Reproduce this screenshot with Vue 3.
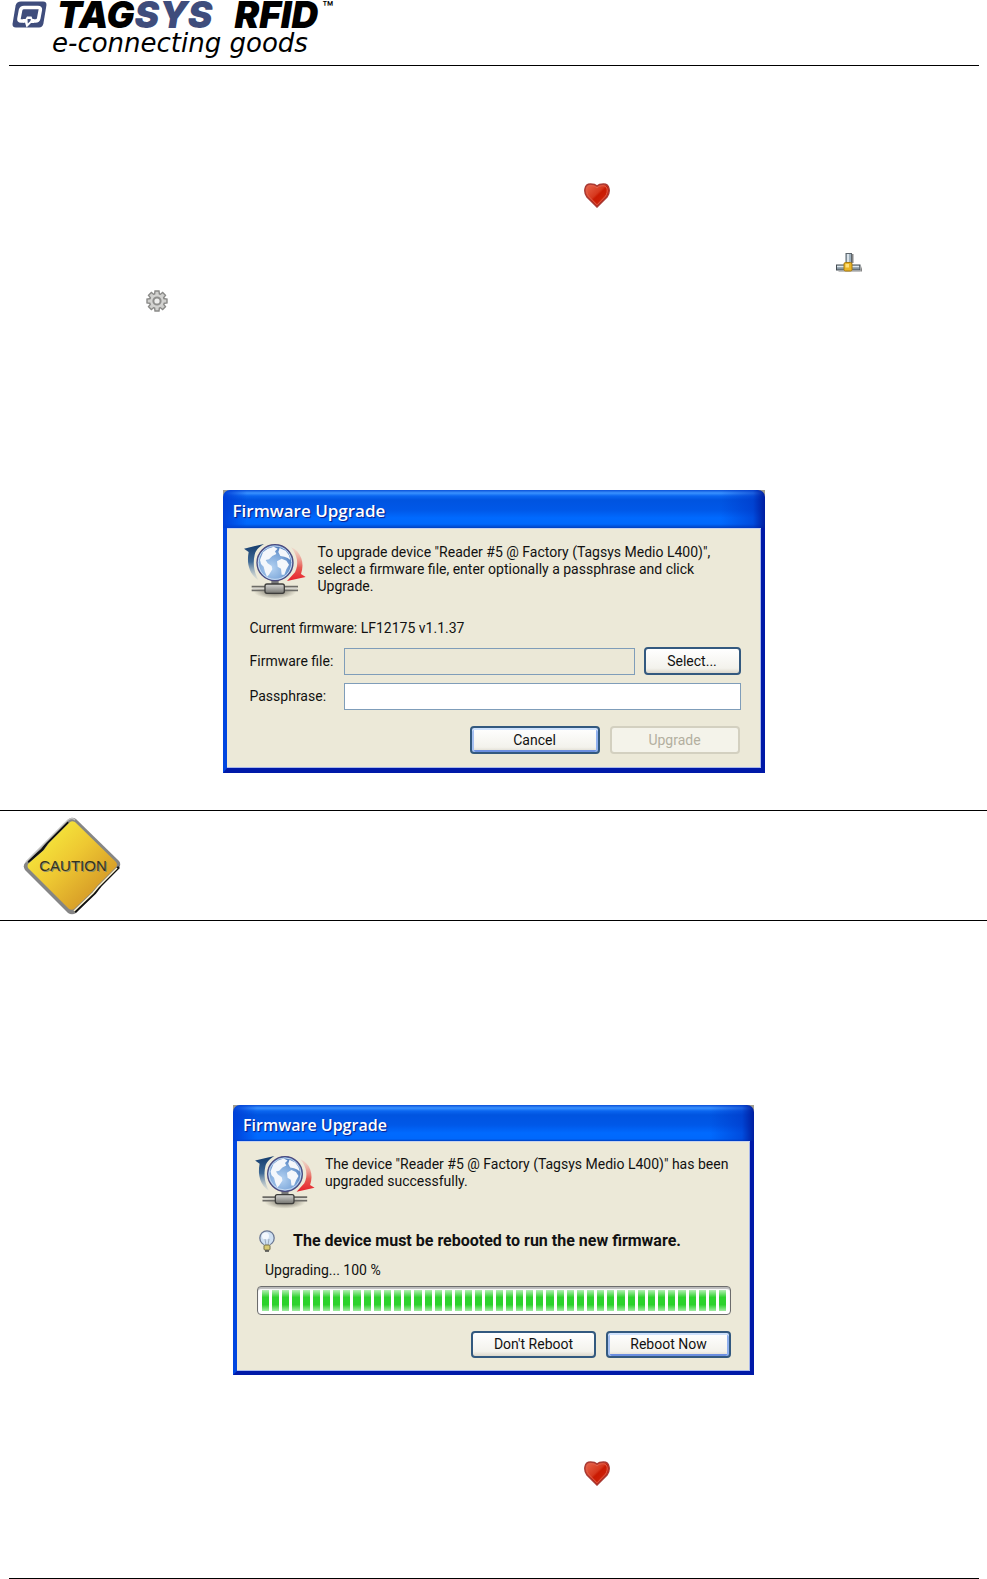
<script setup>
import { ref } from 'vue'

const firmwareFile = ref('')
const passphrase = ref('')
const segments = 46
const teeth = [0, 45, 90, 135, 180, 225, 270, 315]
</script>

<template>
  <div class="page">
    <svg class="symbols" aria-hidden="true">
      <defs>
        <linearGradient id="heartFill" x1="0" y1="0" x2="1" y2="1">
          <stop offset="0" stop-color="#ea6a50" />
          <stop offset="0.45" stop-color="#d6381e" />
          <stop offset="0.52" stop-color="#c91a02" />
          <stop offset="1" stop-color="#d42a12" />
        </linearGradient>
        <radialGradient id="globeFill" cx="0.4" cy="0.65" r="0.65">
          <stop offset="0" stop-color="#b4d2f2" />
          <stop offset="0.6" stop-color="#7ea8da" />
          <stop offset="1" stop-color="#4d78b8" />
        </radialGradient>
        <linearGradient id="blueArrow" x1="0" y1="0" x2="0" y2="1">
          <stop offset="0" stop-color="#123a6b" />
          <stop offset="0.5" stop-color="#3f6a96" />
          <stop offset="1" stop-color="#a9bccb" stop-opacity="0.2" />
        </linearGradient>
        <linearGradient id="redArrow" x1="0" y1="0" x2="0" y2="1">
          <stop offset="0" stop-color="#f2b6ac" stop-opacity="0.3" />
          <stop offset="0.6" stop-color="#e65a52" />
          <stop offset="1" stop-color="#e8202a" />
        </linearGradient>
        <radialGradient id="baseShadow">
          <stop offset="0" stop-color="#4a463c" stop-opacity="0.8" />
          <stop offset="1" stop-color="#4a463c" stop-opacity="0" />
        </radialGradient>
        <linearGradient id="plugFill" x1="0" y1="0" x2="0" y2="1">
          <stop offset="0" stop-color="#d8d8d6" />
          <stop offset="1" stop-color="#74746f" />
        </linearGradient>
      </defs>
      <symbol id="heart" viewBox="0 0 26 25">
        <path d="M13 24 L3 14 C-0.500 9.500 0 1 6.500 1 C9.500 1 11.500 1.500 13 3 C14.500 1.500 16.500 1 19.500 1 C26 1 26.500 9.500 23 14 Z" fill="url(#heartFill)" stroke="#a83a34" stroke-width="1.500" />
        <path d="M13 21.800 L4.400 13 C1.800 9 2 3 6.800 2.800 C9.500 2.700 11.500 3.400 13 5 C14.500 3.400 16.500 2.700 19.200 2.800 C24 3 24.200 9 21.600 13 Z" fill="none" stroke="#e0604c" stroke-width="1" />
      </symbol>
      <symbol id="globe" viewBox="84 189 192 168">
        <ellipse cx="180" cy="335" rx="64" ry="21" fill="url(#baseShadow)" />
        <path d="M87 206 L147 192 C130 202 122 212 119 224 C113 250 117 276 130 300 C104 284 94 252 101 216 Z" fill="url(#blueArrow)" />
        <path d="M228 202 C258 214 270 250 258 282 L272 291 L216 303 L240 277 C252 254 248 226 228 202 Z" fill="url(#redArrow)" />
        <path d="M110 320 H249 M110 331 H249" stroke="#6c6b66" stroke-width="5" />
        <path d="M112 325.500 H247" stroke="#d6d5cf" stroke-width="4" />
        <rect x="169" y="298" width="22" height="16" fill="#77777a" />
        <rect x="150" y="312" width="58" height="28" rx="6" fill="url(#plugFill)" stroke="#3d3d3b" stroke-width="4" />
        <circle cx="180" cy="248" r="54" fill="url(#globeFill)" stroke="#4b4a7e" stroke-width="4" />
        <circle cx="180" cy="248" r="50" fill="none" stroke="#c9dcf2" stroke-width="3" />
        <path d="M135 240 L144 217 L158 206 L176 200 L188 206 L180 214 L184 222 L172 228 L162 238 L152 240 L158 250 L170 258 L172 268 L162 284 L156 290 L150 276 L146 260 L138 252 Z" fill="#f4f7fb" />
        <path d="M194 204 L212 212 L222 226 L226 240 L218 234 L208 230 L196 228 L190 216 Z" fill="#f4f7fb" />
        <path d="M186 244 L200 236 L214 242 L222 254 L214 268 L208 284 L200 284 L198 266 L188 260 Z" fill="#f4f7fb" />
      </symbol>
    </svg>

    <header class="masthead">
      <svg class="mark" viewBox="0 0 35 27" aria-hidden="true">
        <path d="M9 0.500 H31 Q35 0.500 34.400 4.500 L31.400 22.500 Q30.600 26.500 27 26.500 H4 Q0 26.500 0.600 22.500 L3.600 4.500 Q4.600 0.500 9 0.500 Z" fill="#3f4d7c" />
        <path d="M12.500 20 H9 Q6.500 20 7 17.500 L8.600 9 Q9.200 6.500 12 6.500 H26 Q28.800 6.500 28.300 9 L26.700 17.500 Q26.200 20 23.500 20 H20.500" fill="none" stroke="#fff" stroke-width="3.600" />
        <path d="M11 18 H13.500 L15 15.500 H19.500 L20.500 18 H22 V22 H19 L14.500 26.500 L13 21.500 H11 Z" fill="#fff" />
        <path d="M15.500 18 H18.800 L18.400 20 L15.800 22.500 Z" fill="#3f4d7c" />
      </svg>
      <div class="brand">
        <div class="name"><span>TAG<span class="sys">SYS</span></span><span>RFID</span><span class="tm">™</span></div>
        <div class="tagline">e-connecting goods</div>
      </div>
    </header>

    <main>
      <svg class="heart first" role="img" aria-label="Heart"><use href="#heart" /></svg>

      <svg class="network" viewBox="0 0 26 20" role="img" aria-label="Network">
        <path d="M2 18.500 H26 V13 L24 19 H3 Z M15 1 H17.500 V10 H15 Z" fill="#666" opacity="0.8" />
        <rect x="10" y="0.500" width="5.500" height="11" fill="#9fb0bc" stroke="#5e666c" />
        <path d="M12 1 V10" stroke="#eef5fa" stroke-width="1.500" />
        <rect x="0.500" y="12" width="23.500" height="5" fill="#8797a3" stroke="#454c52" />
        <path d="M1 13.500 H23" stroke="#dfe8ee" stroke-width="1.500" />
        <rect x="8" y="9.500" width="8" height="8.500" rx="1.500" fill="#e9b526" stroke="#a87a10" />
        <rect x="9.500" y="11" width="3.500" height="3.500" fill="#ffe07a" />
      </svg>

      <svg class="gear" viewBox="-11 -11 22 22" role="img" aria-label="Settings">
        <g fill="#cfcfcd" stroke="#8a8a88" stroke-width="1.400">
          <path v-for="a in teeth" :key="a" d="M-2.500 -6 L-2 -10 H2 L2.500 -6" :transform="`rotate(${a})`" />
        </g>
        <circle r="6.800" fill="#d3d3d1" />
        <circle r="3.600" fill="#eeeeed" stroke="#8e8e8c" stroke-width="2" />
      </svg>

      <section class="dialog upgrade" aria-labelledby="title-upgrade">
        <h2 id="title-upgrade" class="titlebar">Firmware Upgrade</h2>
        <form class="body" @submit.prevent>
          <div class="intro">
            <svg class="globe" aria-hidden="true"><use href="#globe" /></svg>
            <p>To upgrade device "Reader #5 @ Factory (Tagsys Medio L400)",<br />select a firmware file, enter optionally a passphrase and click<br />Upgrade.</p>
          </div>
          <p class="current">Current firmware: LF12175 v1.1.37</p>
          <div class="row">
            <label for="file">Firmware file:</label>
            <input id="file" v-model="firmwareFile" class="disabled" type="text" readonly />
            <button class="select" type="button">Select...</button>
          </div>
          <div class="row">
            <label for="pass">Passphrase:</label>
            <input id="pass" v-model="passphrase" type="text" />
          </div>
          <div class="actions">
            <button class="focused" type="button">Cancel</button>
            <button type="submit" disabled>Upgrade</button>
          </div>
        </form>
      </section>

      <aside class="caution">
        <svg viewBox="0 0 98 98" role="img" aria-label="Caution">
          <defs>
            <linearGradient id="signFill" x1="0" y1="0" x2="0.900" y2="0.900">
              <stop offset="0.150" stop-color="#f6ea3c" />
              <stop offset="0.500" stop-color="#eec832" />
              <stop offset="1" stop-color="#cf8e24" />
            </linearGradient>
          </defs>
          <path d="M46 2 Q49 -0.500 53 2 L96 44 Q98.500 47 96 51 L53 96 Q49 98.500 45 96 L2 53 Q-0.500 49 2 46 Z" fill="#858585" />
          <path d="M5 45 L19 33 L24 26 L45 5 M52 95 L72 76 L78 68 L96 50" fill="none" stroke="#111" stroke-width="2.500" />
          <path d="M3 45 L45 3 Q49 0 52 3" fill="none" stroke="#c4c4c4" stroke-width="1.500" />
          <path d="M47 5 Q49 3.500 52 5 L93 45 Q95 48 93 50 L74 69 L69 75 L51 92 Q49 93.500 46 92 L5 51 Q4 49 5 47 L21 33 L26 26 Z" fill="url(#signFill)" />
          <path d="M94 51 L75 70 L70 76 L51 94" fill="none" stroke="#fff5cf" stroke-width="1.500" />
          <text x="50" y="54" text-anchor="middle">CAUTION</text>
        </svg>
      </aside>

      <section class="dialog done" aria-labelledby="title-done">
        <h2 id="title-done" class="titlebar">Firmware Upgrade</h2>
        <div class="body">
          <div class="intro">
            <svg class="globe" aria-hidden="true"><use href="#globe" /></svg>
            <p>The device "Reader #5 @ Factory (Tagsys Medio L400)" has been<br />upgraded successfully.</p>
          </div>
          <div class="tip">
            <svg viewBox="0 0 16 22" aria-hidden="true">
              <circle cx="8" cy="8" r="7.200" fill="#cfe0f2" stroke="#6b7893" stroke-width="1.300" />
              <path d="M4 12 H12 L10.500 16 H5.500 Z" fill="#cfe0f2" />
              <circle cx="6.500" cy="6" r="3.500" fill="#f3f8fd" />
              <path d="M6 9 L7 15 M10 9 L9 15" stroke="#8c99ad" stroke-width="0.800" />
              <rect x="5" y="15" width="6" height="5" rx="1" fill="#d8ca72" stroke="#77704a" />
              <path d="M6 21 H10" stroke="#444" stroke-width="1.500" />
            </svg>
            <strong>The device must be rebooted to run the new firmware.</strong>
          </div>
          <p id="progress-label" class="status">Upgrading... 100 %</p>
          <div class="progress" role="progressbar" aria-labelledby="progress-label" aria-valuenow="100">
            <span v-for="n in segments" :key="n"></span>
          </div>
          <div class="actions">
            <button type="button">Don't Reboot</button>
            <button class="focused" type="button">Reboot Now</button>
          </div>
        </div>
      </section>

      <svg class="heart last" role="img" aria-label="Heart"><use href="#heart" /></svg>
    </main>

    <footer></footer>
  </div>
</template>

<style>
body {
  background: #fff;
}
</style>

<style scoped>
.page,
.page * {
  box-sizing: border-box;
}
.page {
  display: flex;
  flex-direction: column;
  min-height: 100vh;
  font-family: Roboto, "Liberation Sans", sans-serif;
  font-size: 14px;
  line-height: 17px;
  color: #111;
}
svg {
  display: block;
  flex: none;
}
p,
h2 {
  margin: 0;
  white-space: nowrap;
}
.symbols {
  width: 0;
  height: 0;
}

.masthead {
  display: flex;
  gap: 10px;
  height: 66px;
  margin: 0 8px 0 9px;
  padding: 1px 0 0 3px;
  border-bottom: 1px solid #000;
}
.mark {
  width: 35px;
  height: 27px;
}
.brand {
  color: #000;
  font-style: italic;
  white-space: nowrap;
}
.name {
  display: flex;
  gap: 22px;
  font-family: Inter, "DejaVu Sans", sans-serif;
  font-size: 37px;
  line-height: 27px;
  font-weight: 900;
}
.sys {
  color: #3f4d7c;
}
.tm {
  margin-left: -18px;
  font-size: 18px;
  line-height: 16px;
  font-style: normal;
  font-weight: 500;
}
.tagline {
  margin-left: -5px;
  padding-top: 1px;
  font-family: "DejaVu Sans", sans-serif;
  font-size: 26px;
  line-height: 28px;
}

main {
  flex: 1;
}
.heart {
  width: 26px;
  height: 25px;
  margin-left: 584px;
}
.heart.first {
  margin-top: 117px;
}
.heart.last {
  margin-top: 86px;
}
.network {
  width: 26px;
  height: 20px;
  margin: 45px 0 0 836px;
}
.gear {
  width: 22px;
  height: 22px;
  margin: 17px 0 0 146px;
}

.dialog {
  margin-left: auto;
  margin-right: auto;
  background: #a09d90;
}
.dialog.upgrade {
  width: 542px;
  margin-top: 178px;
}
.dialog.done {
  width: 521px;
  margin-top: 184px;
}
.titlebar {
  height: 38px;
  padding-left: 10px;
  border-radius: 7px 7px 0 0;
  background:
    linear-gradient(to left, #001ea0 0, #0030c080 12px, transparent 44px),
    linear-gradient(to right, #0040d8 0, transparent 24px),
    linear-gradient(#0a50d8 0, #3a92ff 3px, #0a66f0 6px, #0054e0 10px, #0058e8 20px, #006aff 28px, #0068fc 34px, #0040c0 100%);
  color: #fff;
  font-family: "Open Sans", "Noto Sans", sans-serif;
  font-size: 17px;
  font-weight: 600;
  line-height: 42px;
  text-shadow: 1px 1px 1px #0a1883;
}
.body {
  padding: 15px 20px 14px 16px;
  border: solid #0831d9;
  border-color: #0831d9 #0019a8 #0019a8 #0046e0;
  border-width: 0 4px 5px;
  background: #ece9d8;
  box-shadow: inset 0 1px #c8d3ee, inset -1px 0 #a8b8ec, inset 0 -1px #a8b8ec;
}
.intro {
  display: flex;
  gap: 11px;
  margin-bottom: 21px;
}
.intro p {
  padding-top: 1px;
}
.globe {
  width: 64px;
  height: 56px;
}
.current {
  margin: 0 0 10px 7px;
}
.row {
  display: flex;
  align-items: center;
  height: 28px;
  margin: 0 0 7px 7px;
}
.row label {
  width: 94px;
}
input {
  flex: 1;
  min-width: 0;
  height: 27px;
  padding: 2px 4px;
  border: 1px solid #7f9db9;
  border-radius: 0;
  outline: 0;
  background: #fff;
  font: inherit;
}
input.disabled {
  background: #ebe8d7;
}
.select {
  width: 97px;
  margin-left: 9px;
}
button {
  width: 130px;
  height: 28px;
  padding: 0;
  border: 2px solid #33597f;
  border-radius: 4px;
  background: linear-gradient(#fff, #f3f2ec 80%, #dcd8cc);
  color: #111;
  font: inherit;
}
button.focused {
  box-shadow: inset 0 2px #cfe2fd, inset 2px 0 #a6c1f2, inset -2px 0 #8fb0ee, inset 0 -2px #6c8fe0;
}
button:disabled {
  border-color: #d3d0c0;
  background: #f4f3ea;
  color: #b3af9f;
}
.actions {
  display: flex;
  justify-content: flex-end;
  gap: 10px;
  margin-top: 16px;
}
.upgrade .actions {
  padding-right: 1px;
}

.caution {
  height: 111px;
  margin-top: 37px;
  padding: 6px 0 0 23px;
  border-top: 1px solid #000;
  border-bottom: 1px solid #000;
}
.caution svg {
  width: 98px;
  height: 98px;
}
.caution text {
  font-family: "Liberation Sans", sans-serif;
  font-size: 15px;
  fill: #33331c;
  text-shadow: 1px 1px 0 #8f8f6c;
}

.done .titlebar {
  height: 36px;
  font-size: 16px;
  line-height: 40px;
}
.done .body {
  padding: 14px 19px 13px 17px;
  border-width: 0 4px 4px;
}
.done .intro {
  gap: 9px;
  margin-bottom: 20px;
}
.done .globe {
  width: 62px;
  height: 54px;
}
.tip {
  display: flex;
  align-items: center;
  gap: 18px;
  height: 23px;
  padding-left: 5px;
  font-size: 16px;
  white-space: nowrap;
}
.tip svg {
  width: 16px;
  height: 22px;
}
.status {
  margin: 10px 0 7px 11px;
}
.progress {
  display: flex;
  gap: 3px;
  height: 29px;
  margin-left: 3px;
  padding: 3px 4px;
  border: 1px solid #6c6c6c;
  border-radius: 4px;
  background: #fff;
  box-shadow: inset 0 2px 1px #bbb;
}
.progress span {
  flex: 1;
  background: linear-gradient(#b4f0b4, #2dd22d 35%, #2dd22d 70%, #a0eca0);
}
.done button {
  width: 125px;
  height: 27px;
}

footer {
  margin: 0 8px 0 9px;
  border-top: 1px solid #000;
}
</style>
